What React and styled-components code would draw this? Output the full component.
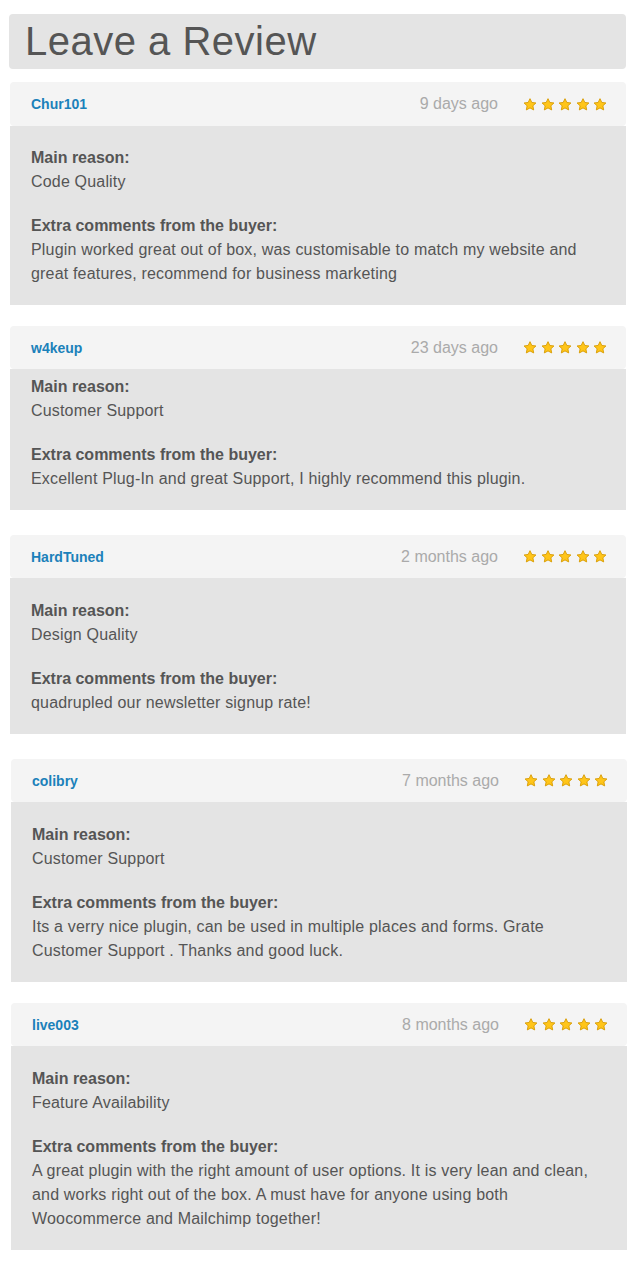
import React from 'react'
import styled, { createGlobalStyle } from 'styled-components'

const GlobalStyle = createGlobalStyle`
  html, body {
    margin: 0;
    padding: 0;
    background: #fff;
    font-family: "Liberation Sans", Arial, Helvetica, sans-serif;
    color: #555;
  }
`

const Page = styled.div`
  padding: 14px 6px 16px 9px;
`

const TitleBox = styled.div`
  background: #e4e4e4;
  border-radius: 4px;
  height: 55px;
  padding: 0 16px;
`

const Title = styled.h1`
  margin: 0;
  font-size: 40px;
  line-height: 55px;
  font-weight: normal;
  letter-spacing: 0.5px;
  color: #555;
`

const Card = styled.div`
  margin-top: ${p => p.gap}px;
  margin-left: ${p => p.shift}px;
  margin-right: ${p => 1 - p.shift}px;
`

const Header = styled.div`
  display: flex;
  align-items: center;
  height: ${p => p.h}px;
  padding: 0 19px 0 21px;
  background: #f4f4f4;
  border-radius: 4px;
`

const User = styled.a`
  font-size: 14px;
  font-weight: bold;
  color: #1b81ba;
  text-decoration: none;
  margin-right: auto;
`

const Ago = styled.span`
  font-size: 16px;
  color: #aaa;
  margin-right: 25px;
`

const Stars = styled.div`
  display: flex;
  gap: 3.5px;
`

const Body = styled.div`
  background: #e4e4e4;
  padding: ${p => p.top}px 21px 19px 21px;
  font-size: 16px;
  line-height: 24px;
  color: #555;
`

const Block = styled.div`
  & + & {
    margin-top: 20px;
  }
`

const Label = styled.div`
  font-weight: bold;
`

const Text = styled.div`
  letter-spacing: 0.18px;
`

const Star = () => (
  <svg width="14" height="13" viewBox="0 0 24 23">
    <path
      d="M12 1.2l3.2 6.7 7.3.9-5.4 5 1.4 7.3L12 17.5l-6.5 3.6 1.4-7.3-5.4-5 7.3-.9z"
      fill="#ffc519"
      stroke="#d79a00"
      strokeWidth="1.6"
      strokeLinejoin="round"
    />
  </svg>
)

const reviews = [
  {
    user: 'Chur101',
    ago: '9 days ago',
    reason: 'Code Quality',
    comment: 'Plugin worked great out of box, was customisable to match my website and great features, recommend for business marketing',
    gap: 13, top: 20, h: 44, shift: 1,
  },
  {
    user: 'w4keup',
    ago: '23 days ago',
    reason: 'Customer Support',
    comment: 'Excellent Plug-In and great Support, I highly recommend this plugin.',
    gap: 21, top: 6, h: 43, shift: 1,
  },
  {
    user: 'HardTuned',
    ago: '2 months ago',
    reason: 'Design Quality',
    comment: 'quadrupled our newsletter signup rate!',
    gap: 25, top: 21, h: 43, shift: 1,
  },
  {
    user: 'colibry',
    ago: '7 months ago',
    reason: 'Customer Support',
    comment: 'Its a verry nice plugin, can be used in multiple places and forms. Grate Customer Support . Thanks and good luck.',
    gap: 25, top: 21, h: 43, shift: 2,
  },
  {
    user: 'live003',
    ago: '8 months ago',
    reason: 'Feature Availability',
    comment: 'A great plugin with the right amount of user options. It is very lean and clean, and works right out of the box. A must have for anyone using both Woocommerce and Mailchimp together!',
    gap: 21, top: 21, h: 43, shift: 2,
  },
]

export default function App() {
  return (
    <Page>
      <GlobalStyle />
      <TitleBox>
        <Title>Leave a Review</Title>
      </TitleBox>
      {reviews.map(r => (
        <Card key={r.user} gap={r.gap} shift={r.shift}>
          <Header h={r.h}>
            <User href="#">{r.user}</User>
            <Ago>{r.ago}</Ago>
            <Stars>
              {[0, 1, 2, 3, 4].map(i => <Star key={i} />)}
            </Stars>
          </Header>
          <Body top={r.top}>
            <Block>
              <Label>Main reason:</Label>
              <Text>{r.reason}</Text>
            </Block>
            <Block>
              <Label>Extra comments from the buyer:</Label>
              <Text>{r.comment}</Text>
            </Block>
          </Body>
        </Card>
      ))}
    </Page>
  )
}
